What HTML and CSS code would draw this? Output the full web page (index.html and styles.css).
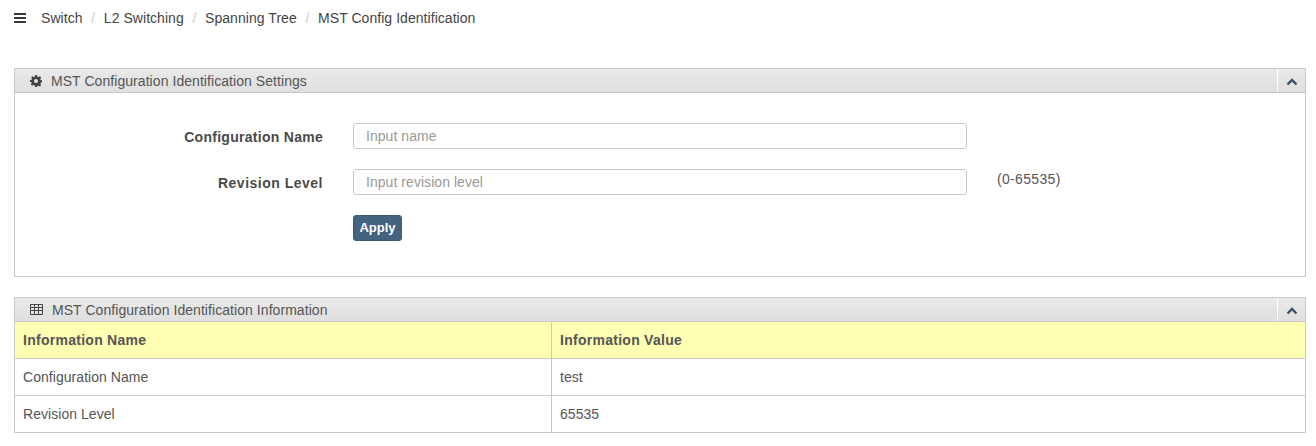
FILE: index.html
```html
<!DOCTYPE html>
<html lang="en">
<head>
<meta charset="utf-8">
<title>MST Config Identification</title>
<link rel="stylesheet" href="styles.css">
</head>
<body>
<nav class="crumbs">
  <svg class="menu-icon" width="12" height="10" viewBox="0 0 12 10"><path d="M0 0h12v2H0zM0 4h12v2H0zM0 8h12v2H0z" fill="#393939"/></svg>
  <span class="crumb">Switch</span><span class="sep">/</span>
  <span class="crumb">L2 Switching</span><span class="sep">/</span>
  <span class="crumb">Spanning Tree</span><span class="sep">/</span>
  <span class="crumb">MST Config Identification</span>
</nav>
<main class="content">
  <section class="box box-settings">
    <header class="box-head">
      <svg class="head-icon" width="12" height="12" viewBox="0 0 24 24"><path fill="#444" fill-rule="evenodd" d="M10 0h4l.7 3.300 2 .8L19.600 2.300l2.800 2.800-1.800 2.900.8 2 3.300.7v4l-3.300.7-.8 2 1.800 2.900-2.800 2.800-2.900-1.800-2 .8L14 24h-4l-.7-3.300-2-.8-2.900 1.800-2.800-2.800 1.800-2.900-.8-2L0 14v-4l3.300-.7.8-2L2.300 5.100l2.800-2.800 2.900 1.800 2-.8zM12 8a4 4 0 1 0 0 8 4 4 0 0 0 0-8z"/></svg>
      <h2 class="box-title">MST Configuration Identification Settings</h2>
      <span class="toggle"><svg width="12" height="8" viewBox="0 0 12 8"><path d="M1.500 6.500 6 2l4.500 4.500" fill="none" stroke="#3f4f5f" stroke-width="2.400"/></svg></span>
    </header>
    <form class="form">
      <div class="row">
        <label class="label">Configuration Name</label>
        <input class="input" type="text" placeholder="Input name">
      </div>
      <div class="row">
        <label class="label label-short">Revision Level</label>
        <input class="input" type="text" placeholder="Input revision level">
        <span class="hint">(0-65535)</span>
      </div>
      <div class="row actions">
        <button class="btn" type="button">Apply</button>
      </div>
    </form>
  </section>
  <section class="box">
    <header class="box-head">
      <svg class="head-icon table-icon" width="13" height="11" viewBox="0 0 13 11"><path fill="none" stroke="#444" d="M.5.500h12v10H.5zM.5 3.500h12M.5 6.500h12M4.500 .5v10M8.500 .5v10"/></svg>
      <h2 class="box-title">MST Configuration Identification Information</h2>
      <span class="toggle"><svg width="12" height="8" viewBox="0 0 12 8"><path d="M1.500 6.500 6 2l4.500 4.500" fill="none" stroke="#3f4f5f" stroke-width="2.400"/></svg></span>
    </header>
    <table class="info">
      <thead>
        <tr><th>Information Name</th><th>Information Value</th></tr>
      </thead>
      <tbody>
        <tr><td>Configuration Name</td><td>test</td></tr>
        <tr><td>Revision Level</td><td>65535</td></tr>
      </tbody>
    </table>
  </section>
</main>
</body>
</html>
```
FILE: styles.css
```css
* { box-sizing: border-box; }
html, body { margin: 0; padding: 0; background: #fff; }
body {
  font-family: "Liberation Sans", Arial, sans-serif;
  font-size: 14px;
  line-height: 20px;
  color: #555;
}
.crumbs {
  display: flex;
  align-items: center;
  height: 36px;
  padding-left: 14px;
  color: #444;
}
.crumb { letter-spacing: .05px; }
.menu-icon { margin-right: 15px; }
.sep { color: #ccc; margin: 0 8.7px; }
.content { padding: 32px 10px 0 14px; }
.box { border: 1px solid #c8c8c8; }
.box-settings { margin-bottom: 20px; }
.box-head {
  display: flex;
  align-items: center;
  height: 24px;
  padding-left: 15px;
  background: linear-gradient(#e9e9e9, #dfdfdf);
  border-bottom: 1px solid #c8c8c8;
}
.head-icon { margin-right: 9px; }
.box-title {
  margin: 0;
  flex: 1;
  font-size: 14px;
  font-weight: normal;
  letter-spacing: .06px;
  color: #555;
}
.toggle {
  display: flex;
  align-items: center;
  justify-content: center;
  width: 28px;
  height: 23px;
  border-left: 1px solid #fff;
  padding-top: 3px;
}
.form { padding: 30px 0 35px; }
.row {
  display: flex;
  align-items: center;
  height: 26px;
  margin-bottom: 20px;
}
.label {
  width: 308px;
  text-align: right;
  font-weight: bold;
  letter-spacing: .28px;
  color: #4a4a4a;
  margin-right: 30px;
  padding-top: 2px;
}
.label-short { letter-spacing: .5px; }
.input {
  width: 614px;
  height: 26px;
  border: 1px solid #c8c8c8;
  border-radius: 3px;
  padding: 0 12px;
  font: 14px "Liberation Sans", Arial, sans-serif;
  letter-spacing: .05px;
  color: #555;
  outline: none;
}
.input::placeholder { color: #999; opacity: 1; }
.hint { margin-left: 30px; margin-top: -6px; letter-spacing: .33px; color: #555; }
.actions { padding-left: 338px; margin-bottom: 0; }
.btn {
  width: 49px;
  height: 26px;
  padding: 0 0 2px;
  border: 1px solid #3c5a75;
  border-radius: 3px;
  background: #44637f;
  color: #fff;
  font: bold 13px "Liberation Sans", Arial, sans-serif;
}
.info {
  width: 100%;
  border-collapse: collapse;
  table-layout: fixed;
}
.info th, .info td {
  height: 37px;
  padding: 0 8px;
  text-align: left;
  border-bottom: 1px solid #c8c8c8;
  border-left: 1px solid #c8c8c8;
}
.info th:first-child, .info td:first-child { border-left: 0; width: 536.5px; }
.info tr:last-child td { border-bottom: 0; }
.info thead tr { background: #ffffb3; }
.info th { height: 36px; font-weight: bold; letter-spacing: .27px; color: #555; }
.info td { letter-spacing: .05px; }
```
